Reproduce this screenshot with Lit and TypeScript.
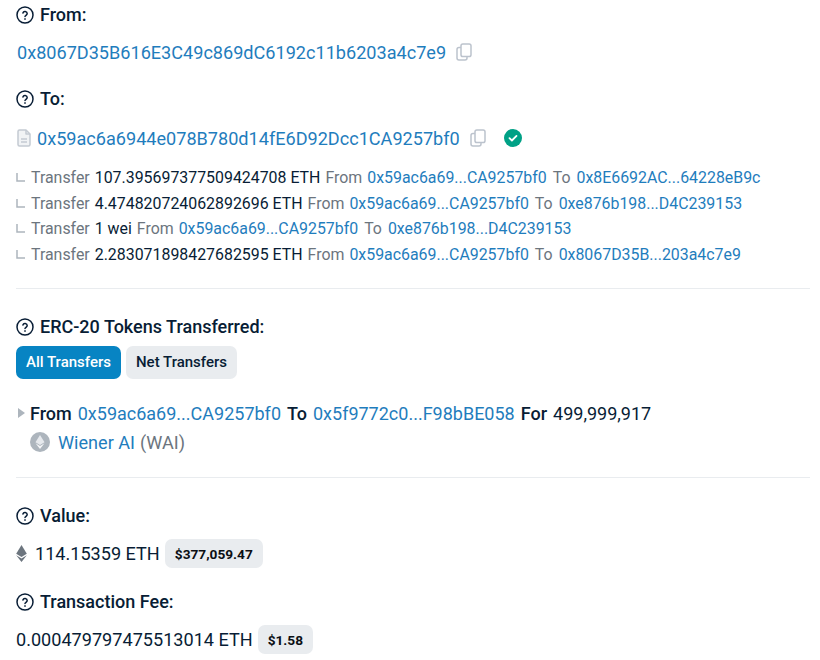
import { LitElement, html, css, svg } from "lit";
import { customElement } from "lit/decorators.js";

const help = html`<svg class="help" viewBox="0 0 18 18" fill="none" stroke="#081d35" stroke-width="1.5">
  <circle cx="9" cy="9" r="8"></circle>
  <path d="M6.9 7a2.2 2.2 0 0 1 4.3.6c0 1.5-2.2 1.8-2.2 3" stroke-linecap="round"></path>
  <circle cx="9" cy="13" r=".5" fill="#081d35" stroke-width=".8"></circle>
</svg>`;

const copy = html`<svg class="copy" viewBox="0 0 16 18" fill="none" stroke="#bcc3cd" stroke-width="1.5" stroke-linejoin="round">
  <rect x="5" y="1" width="10" height="12.5" rx="1.8"></rect>
  <path d="M5 4.5H3A2 2 0 0 0 1 6.5V15a2 2 0 0 0 2 2h6a2 2 0 0 0 2-2v-1.5"></path>
</svg>`;

const corner = html`<svg class="corner" viewBox="0 0 9 9" fill="none" stroke="#adb5bd" stroke-width="1.5"><path d="M1 0v8h8"></path></svg>`;

const transfers = [
  { amount: "107.395697377509424708 ETH", to: "0x8E6692AC...64228eB9c" },
  { amount: "4.474820724062892696 ETH", to: "0xe876b198...D4C239153" },
  { amount: "1 wei", to: "0xe876b198...D4C239153" },
  { amount: "2.283071898427682595 ETH", to: "0x8067D35B...203a4c7e9" },
];

const ethMark = svg`<path d="M5 0 0 8.2 5 11.2 10 8.2Z" fill="#6c757e"></path><path d="M0 9.6 5 16 10 9.6 5 12.6Z" fill="#6c757e"></path>`;

@customElement("app-root")
export class AppRoot extends LitElement {
  static styles = css`
    :host {
      display: block;
      width: 820px;
      height: 660px;
      overflow: hidden;
      background: #fff;
      font-family: Roboto, "Liberation Sans", sans-serif;
      font-size: 18.1px;
      color: #081d35;
    }
    .page {
      padding: 4px 10px 0 16px;
    }
    a {
      color: #1f7dbd;
      text-decoration: none;
    }
    .label {
      display: flex;
      align-items: center;
      gap: 6px;
      height: 22px;
      font-weight: 500;
      font-size: 18px;
    }
    .label span {
      padding-bottom: 2px;
    }
    .help {
      width: 18px;
      height: 18px;
      flex: none;
    }
    .line {
      display: flex;
      align-items: center;
      height: 24px;
      white-space: nowrap;
    }
    .copy {
      width: 16px;
      height: 18px;
      margin-left: 10px;
      flex: none;
    }
    .from-line {
      margin: 14px 0 0 1px;
    }
    .to-label {
      margin-top: 24px;
    }
    .to-line {
      margin-top: 16px;
    }
    .doc {
      width: 14px;
      height: 18px;
      margin: 0 6px 0 1px;
      flex: none;
    }
    .check {
      width: 18px;
      height: 18px;
      margin-left: 18px;
      flex: none;
    }
    .calls {
      display: flex;
      flex-direction: column;
      margin-top: 15px;
      font-size: 15.9px;
      color: #6c757e;
    }
    .call {
      display: flex;
      align-items: center;
      gap: 5px;
      height: 25.5px;
      white-space: nowrap;
    }
    .corner {
      width: 9px;
      height: 9px;
      margin-right: 1px;
      flex: none;
    }
    .call b {
      font-weight: 400;
      color: #081d35;
    }
    .call a:first-of-type {
      margin-right: 1px;
    }
    .call a:last-of-type {
      margin-left: 1px;
    }
    hr {
      border: none;
      border-top: 1px solid #e9ecef;
      margin: 0;
    }
    .calls + hr {
      margin-top: 21px;
    }
    .erc-label {
      margin-top: 27px;
    }
    .tabs {
      display: flex;
      gap: 5px;
      margin-top: 8px;
    }
    .tab {
      height: 33px;
      padding: 0 10px 2px;
      box-sizing: border-box;
      display: flex;
      align-items: center;
      border-radius: 7px;
      font-size: 15px;
      font-weight: 500;
      background: #e9ecef;
      color: #081d35;
    }
    .tab.active {
      background: #0784c3;
      color: #fff;
    }
    .token-row {
      display: flex;
      align-items: center;
      gap: 6px;
      height: 24px;
      margin-top: 22px;
      font-size: 18px;
      white-space: nowrap;
    }
    .arrow {
      width: 0;
      height: 0;
      margin-left: 2px;
      margin-right: -1px;
      border-left: 7px solid #adb5bd;
      border-top: 5.5px solid transparent;
      border-bottom: 5.5px solid transparent;
    }
    .token-row strong {
      font-weight: 500;
    }
    .token {
      display: flex;
      align-items: center;
      gap: 5px;
      height: 24px;
      margin: 5px 0 0 14px;
    }
    .token-icon {
      width: 20px;
      height: 20px;
      margin-right: 3px;
      flex: none;
    }
    .token span {
      color: #6c757e;
    }
    .token + hr {
      margin-top: 23px;
    }
    .value-label {
      margin-top: 27px;
    }
    .value {
      display: flex;
      align-items: center;
      gap: 5px;
      margin-top: 12px;
      height: 29px;
      white-space: nowrap;
    }
    .eth {
      width: 11px;
      height: 17px;
      margin-right: 3px;
      flex: none;
    }
    .pill {
      display: flex;
      align-items: center;
      height: 29px;
      padding: 0 10px;
      border-radius: 7px;
      background: #e9ecef;
      font-size: 13.7px;
      font-weight: 700;
      color: #0b0f14;
    }
    .fee-label {
      margin-top: 23px;
    }
  `;

  render() {
    return html`<div class="page">
      <div class="label">${help}<span>From:</span></div>
      <div class="line from-line">
        <a>0x8067D35B616E3C49c869dC6192c11b6203a4c7e9</a>${copy}
      </div>
      <div class="label to-label">${help}<span>To:</span></div>
      <div class="line to-line">
        <svg class="doc" viewBox="0 0 14 18" fill="none" stroke="#c4cad2" stroke-width="1.5" stroke-linejoin="round">
          <path d="M2.5 1H9l4 4v10.5a1.500 1.500 0 0 1-1.500 1.500h-9A1.500 1.500 0 0 1 1 15.500v-13A1.500 1.500 0 0 1 2.500 1Z" fill="#f1f3f5"></path>
          <path d="M9 1v4h4M4 10h6M4 13h6"></path>
        </svg>
        <a>0x59ac6a6944e078B780d14fE6D92Dcc1CA9257bf0</a>${copy}
        <svg class="check" viewBox="0 0 18 18">
          <circle cx="9" cy="9" r="9" fill="#00a186"></circle>
          <path d="m5.5 9.2 2.4 2.3 4.6-4.6" fill="none" stroke="#fff" stroke-width="1.8" stroke-linecap="round" stroke-linejoin="round"></path>
        </svg>
      </div>
      <div class="calls">
        ${transfers.map(
          (t) => html`<div class="call">
            ${corner}Transfer <b>${t.amount}</b> From
            <a>0x59ac6a69...CA9257bf0</a> To <a>${t.to}</a>
          </div>`
        )}
      </div>
      <hr />
      <div class="label erc-label">${help}<span>ERC-20 Tokens Transferred:</span></div>
      <div class="tabs">
        <div class="tab active">All Transfers</div>
        <div class="tab">Net Transfers</div>
      </div>
      <div class="token-row">
        <i class="arrow"></i><strong>From</strong>
        <a>0x59ac6a69...CA9257bf0</a><strong>To</strong>
        <a>0x5f9772c0...F98bBE058</a><strong>For</strong> 499,999,917
      </div>
      <div class="token">
        <svg class="token-icon" viewBox="0 0 20 20">
          <circle cx="10" cy="10" r="10" fill="#adb5bd"></circle>
          <path d="M10 3 5.5 10.3 10 13l4.500-2.700Z" fill="#e6e9ed"></path>
          <path d="M5.500 11.300 10 17l4.500-5.700L10 14Z" fill="#f4f5f7"></path>
        </svg>
        <a>Wiener AI</a><span>(WAI)</span>
      </div>
      <hr />
      <div class="label value-label">${help}<span>Value:</span></div>
      <div class="value">
        <svg class="eth" viewBox="0 0 10 16">${ethMark}</svg>
        114.15359 ETH
        <div class="pill">$377,059.47</div>
      </div>
      <div class="label fee-label">${help}<span>Transaction Fee:</span></div>
      <div class="value">
        0.000479797475513014 ETH
        <div class="pill">$1.58</div>
      </div>
    </div>`;
  }
}
